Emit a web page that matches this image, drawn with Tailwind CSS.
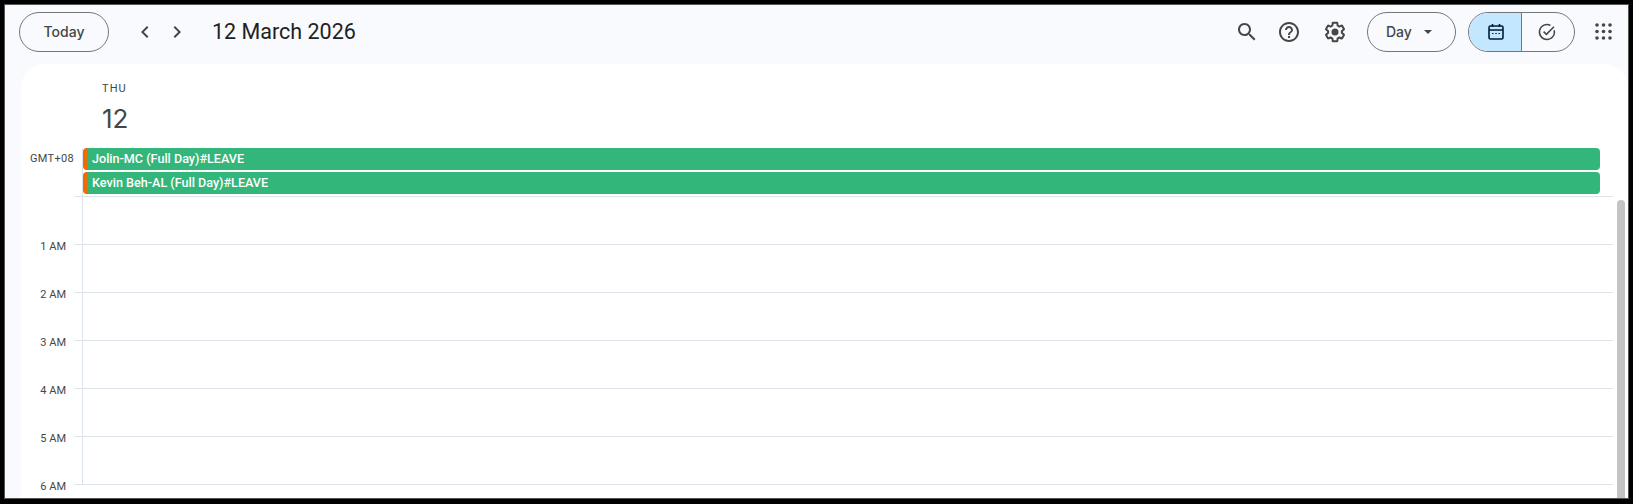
<!DOCTYPE html>
<html lang="en">
<head>
    <meta charset="UTF-8">
    <title>Calendar</title>
    <script src="https://cdn.jsdelivr.net/npm/@tailwindcss/browser@4"></script>
</head>
<body class="bg-black font-['Roboto',sans-serif] overflow-hidden">
    <div class="w-[1633px] h-[504px] pt-[4px] pl-[4px] pr-[4px] pb-[5px]">
        <div class="w-full h-full flex flex-col bg-[#f8fafd] border border-[#555] overflow-hidden">

            <!-- top bar -->
            <header class="h-[59px] shrink-0 flex items-center pl-[14px] pb-[6px] text-[#1f1f1f]">
                <button class="w-[90px] h-[40px] rounded-full border border-[#747775] text-[14px] font-medium text-[#444746] font-['Inter',sans-serif]">Today</button>
                <svg class="ml-[24px] w-[24px] h-[24px] text-[#444746]" viewBox="0 0 24 24" fill="currentColor"><path d="M15.41 7.41 14 6l-6 6 6 6 1.41-1.41L10.83 12z"/></svg>
                <svg class="ml-[8px] w-[24px] h-[24px] text-[#444746]" viewBox="0 0 24 24" fill="currentColor"><path d="M8.59 16.59 10 18l6-6-6-6-1.41 1.41L13.17 12z"/></svg>
                <h1 class="ml-[23px] text-[21.5px] leading-[28px] text-[#1f1f1f]">12 March 2026</h1>

                <svg class="ml-auto w-[24px] h-[24px] text-[#444746]" viewBox="0 0 24 24" fill="currentColor"><path d="M15.5 14h-.79l-.28-.27C15.41 12.59 16 11.11 16 9.5 16 5.91 13.09 3 9.5 3S3 5.91 3 9.5 5.91 16 9.5 16c1.61 0 3.09-.59 4.23-1.57l.27.28v.79l5 4.99L20.49 19l-4.99-5zm-6 0C7.01 14 5 11.99 5 9.5S7.01 5 9.5 5 14 7.01 14 9.5 11.99 14 9.5 14z"/></svg>
                <svg class="ml-[18px] w-[24px] h-[24px] text-[#444746]" viewBox="0 0 24 24" fill="currentColor"><path d="M11 18h2v-2h-2v2zm1-16C6.48 2 2 6.48 2 12s4.48 10 10 10 10-4.48 10-10S17.52 2 12 2zm0 18c-4.41 0-8-3.59-8-8s3.59-8 8-8 8 3.59 8 8-3.59 8-8 8zm0-14c-2.21 0-4 1.79-4 4h2c0-1.1.9-2 2-2s2 .9 2 2c0 2-3 1.75-3 5h2c0-2.25 3-2.5 3-5 0-2.21-1.79-4-4-4z"/></svg>
                <svg class="ml-[22px] w-[24px] h-[24px] text-[#444746]" viewBox="0 0 24 24" fill="currentColor"><path d="M13.85 22.25h-3.7c-.74 0-1.36-.54-1.45-1.27l-.27-1.89c-.27-.14-.53-.29-.79-.46l-1.8.72c-.7.26-1.47-.03-1.81-.65L2.2 15.53c-.35-.66-.2-1.44.36-1.88l1.53-1.19c-.01-.15-.02-.3-.02-.46 0-.15.01-.31.02-.46l-1.52-1.19c-.59-.45-.74-1.26-.37-1.88l1.85-3.19c.34-.62 1.11-.9 1.79-.63l1.81.73c.26-.17.52-.32.78-.46l.27-1.91c.09-.7.71-1.25 1.44-1.25h3.7c.74 0 1.36.54 1.45 1.27l.27 1.89c.27.14.53.29.79.46l1.8-.72c.71-.26 1.48.03 1.82.65l1.84 3.18c.36.66.2 1.44-.36 1.88l-1.52 1.19c.01.15.02.3.02.46s-.01.31-.02.46l1.52 1.19c.56.45.72 1.23.37 1.86l-1.86 3.22c-.34.62-1.11.9-1.8.63l-1.8-.72c-.26.17-.52.32-.78.46l-.27 1.91c-.1.68-.72 1.22-1.46 1.22zm-3.23-2h2.76l.37-2.55.53-.22c.44-.18.88-.44 1.34-.78l.45-.34 2.38.96 1.38-2.4-2.03-1.58.07-.56c.03-.26.06-.51.06-.78s-.03-.53-.06-.78l-.07-.56 2.03-1.58-1.39-2.4-2.39.96-.45-.35c-.42-.32-.87-.58-1.33-.77l-.52-.22-.37-2.55h-2.76l-.37 2.55-.53.21c-.44.19-.88.44-1.34.79l-.45.33-2.38-.95-1.39 2.39 2.03 1.58-.07.56a7 7 0 0 0-.06.79c0 .26.02.53.06.78l.07.56-2.03 1.58 1.38 2.4 2.39-.96.45.35c.43.33.86.58 1.33.77l.53.22.38 2.55z"/><circle cx="12" cy="12" r="3.5"/></svg>

                <button class="ml-[20px] w-[89px] h-[40px] rounded-full border border-[#747775] flex items-center pl-[18px] text-[14px] font-medium text-[#444746] font-['Inter',sans-serif]">
                    Day
                    <svg class="ml-[12px] w-[8px] h-[4px]" viewBox="0 0 10 5" fill="currentColor"><path d="M0 0l5 5 5-5z"/></svg>
                </button>

                <div class="ml-[12px] w-[107px] h-[40px] rounded-full border border-[#747775] flex overflow-hidden">
                    <div class="w-[53px] bg-[#c2e7ff] border-r border-[#747775] flex items-center justify-center pl-[2px]">
                        <svg class="w-[20px] h-[20px] text-[#001d35]" viewBox="0 0 20 20" fill="none" stroke="currentColor" stroke-width="1.6"><rect x="3" y="4" width="14" height="13" rx="1.5"/><path d="M3 8h14M6.5 2v3M13.5 2v3"/><path d="M6 11.5h1.5M9.3 11.5h1.5M12.5 11.5H14" stroke-width="1.2"/></svg>
                    </div>
                    <div class="flex-1 flex items-center justify-center pr-[2px]">
                        <svg class="w-[20px] h-[20px] text-[#444746]" viewBox="0 0 20 20" fill="none" stroke="currentColor" stroke-width="1.5"><path d="M17.2 8.2A7.5 7.5 0 1 1 13.5 3.4"/><path d="M6.6 9.6l2.8 2.8 7.6-7.6"/></svg>
                    </div>
                </div>

                <svg class="ml-[20px] mr-[16px] w-[17px] h-[17px] text-[#444746]" viewBox="0 0 17 17" fill="currentColor"><circle cx="2" cy="2" r="1.8"/><circle cx="8.5" cy="2" r="1.8"/><circle cx="15" cy="2" r="1.8"/><circle cx="2" cy="8.5" r="1.8"/><circle cx="8.5" cy="8.5" r="1.8"/><circle cx="15" cy="8.5" r="1.8"/><circle cx="2" cy="15" r="1.8"/><circle cx="8.5" cy="15" r="1.8"/><circle cx="15" cy="15" r="1.8"/></svg>
            </header>

            <!-- day panel -->
            <main class="flex-1 min-h-0 ml-[16px] bg-white rounded-t-[24px] overflow-hidden flex flex-col">
                <div class="h-[84px] shrink-0 pl-[81px] pt-[18px]">
                    <div class="text-[11px] leading-[14px] tracking-[0.1em] text-[#444746]">THU</div>
                    <div class="mt-[6px] text-[26px] leading-[34px] text-[#444746] font-['Inter',sans-serif]">12</div>
                </div>

                <!-- all day events -->
                <div class="h-[49px] shrink-0 flex">
                    <div class="w-[53px] shrink-0 pt-[3px] text-[11px] leading-[15px] tracking-[0.03em] text-[#444746] text-right">GMT+08</div>
                    <div class="w-[8px] shrink-0 border-b border-[#dde3ea] self-end"></div>
                    <div class="w-[1531px] border-l border-b border-[#dde3ea] pr-[13px] flex flex-col gap-[2px]">
                        <div class="h-[22px] w-full bg-[#33b679] rounded-[4px] border-l-[4px] border-[#ef6c00] pl-[5px] text-[12.6px] leading-[22px] font-medium text-white">Jolin-MC (Full Day)#LEAVE</div>
                        <div class="h-[22px] w-full bg-[#33b679] rounded-[4px] border-l-[4px] border-[#ef6c00] pl-[5px] text-[12.6px] leading-[22px] font-medium text-white">Kevin Beh-AL (Full Day)#LEAVE</div>
                    </div>
                </div>

                <!-- hours -->
                <div class="relative flex-1 min-h-0 overflow-hidden">
                    <div class="flex h-[48px]"><div class="w-[45px] shrink-0 text-[11px] leading-[14px] text-[#444746] text-right self-end translate-y-[9px]">1 AM</div><div class="w-[8px] shrink-0"></div><div class="w-[8px] shrink-0 border-b border-[#dde3ea]"></div><div class="w-[1531px] border-l border-b border-[#dde3ea]"></div></div>
                    <div class="flex h-[48px]"><div class="w-[45px] shrink-0 text-[11px] leading-[14px] text-[#444746] text-right self-end translate-y-[9px]">2 AM</div><div class="w-[8px] shrink-0"></div><div class="w-[8px] shrink-0 border-b border-[#dde3ea]"></div><div class="w-[1531px] border-l border-b border-[#dde3ea]"></div></div>
                    <div class="flex h-[48px]"><div class="w-[45px] shrink-0 text-[11px] leading-[14px] text-[#444746] text-right self-end translate-y-[9px]">3 AM</div><div class="w-[8px] shrink-0"></div><div class="w-[8px] shrink-0 border-b border-[#dde3ea]"></div><div class="w-[1531px] border-l border-b border-[#dde3ea]"></div></div>
                    <div class="flex h-[48px]"><div class="w-[45px] shrink-0 text-[11px] leading-[14px] text-[#444746] text-right self-end translate-y-[9px]">4 AM</div><div class="w-[8px] shrink-0"></div><div class="w-[8px] shrink-0 border-b border-[#dde3ea]"></div><div class="w-[1531px] border-l border-b border-[#dde3ea]"></div></div>
                    <div class="flex h-[48px]"><div class="w-[45px] shrink-0 text-[11px] leading-[14px] text-[#444746] text-right self-end translate-y-[9px]">5 AM</div><div class="w-[8px] shrink-0"></div><div class="w-[8px] shrink-0 border-b border-[#dde3ea]"></div><div class="w-[1531px] border-l border-b border-[#dde3ea]"></div></div>
                    <div class="flex h-[48px]"><div class="w-[45px] shrink-0 text-[11px] leading-[14px] text-[#444746] text-right self-end translate-y-[9px]">6 AM</div><div class="w-[8px] shrink-0"></div><div class="w-[8px] shrink-0 border-b border-[#dde3ea]"></div><div class="w-[1531px] border-l border-b border-[#dde3ea]"></div></div>
                    <!-- scrollbar thumb -->
                    <div class="absolute right-[3px] top-[3px] bottom-0 w-[8px] rounded-t-full bg-[#c4c4c4]"></div>
                </div>
            </main>
        </div>
    </div>
</body>
</html>
